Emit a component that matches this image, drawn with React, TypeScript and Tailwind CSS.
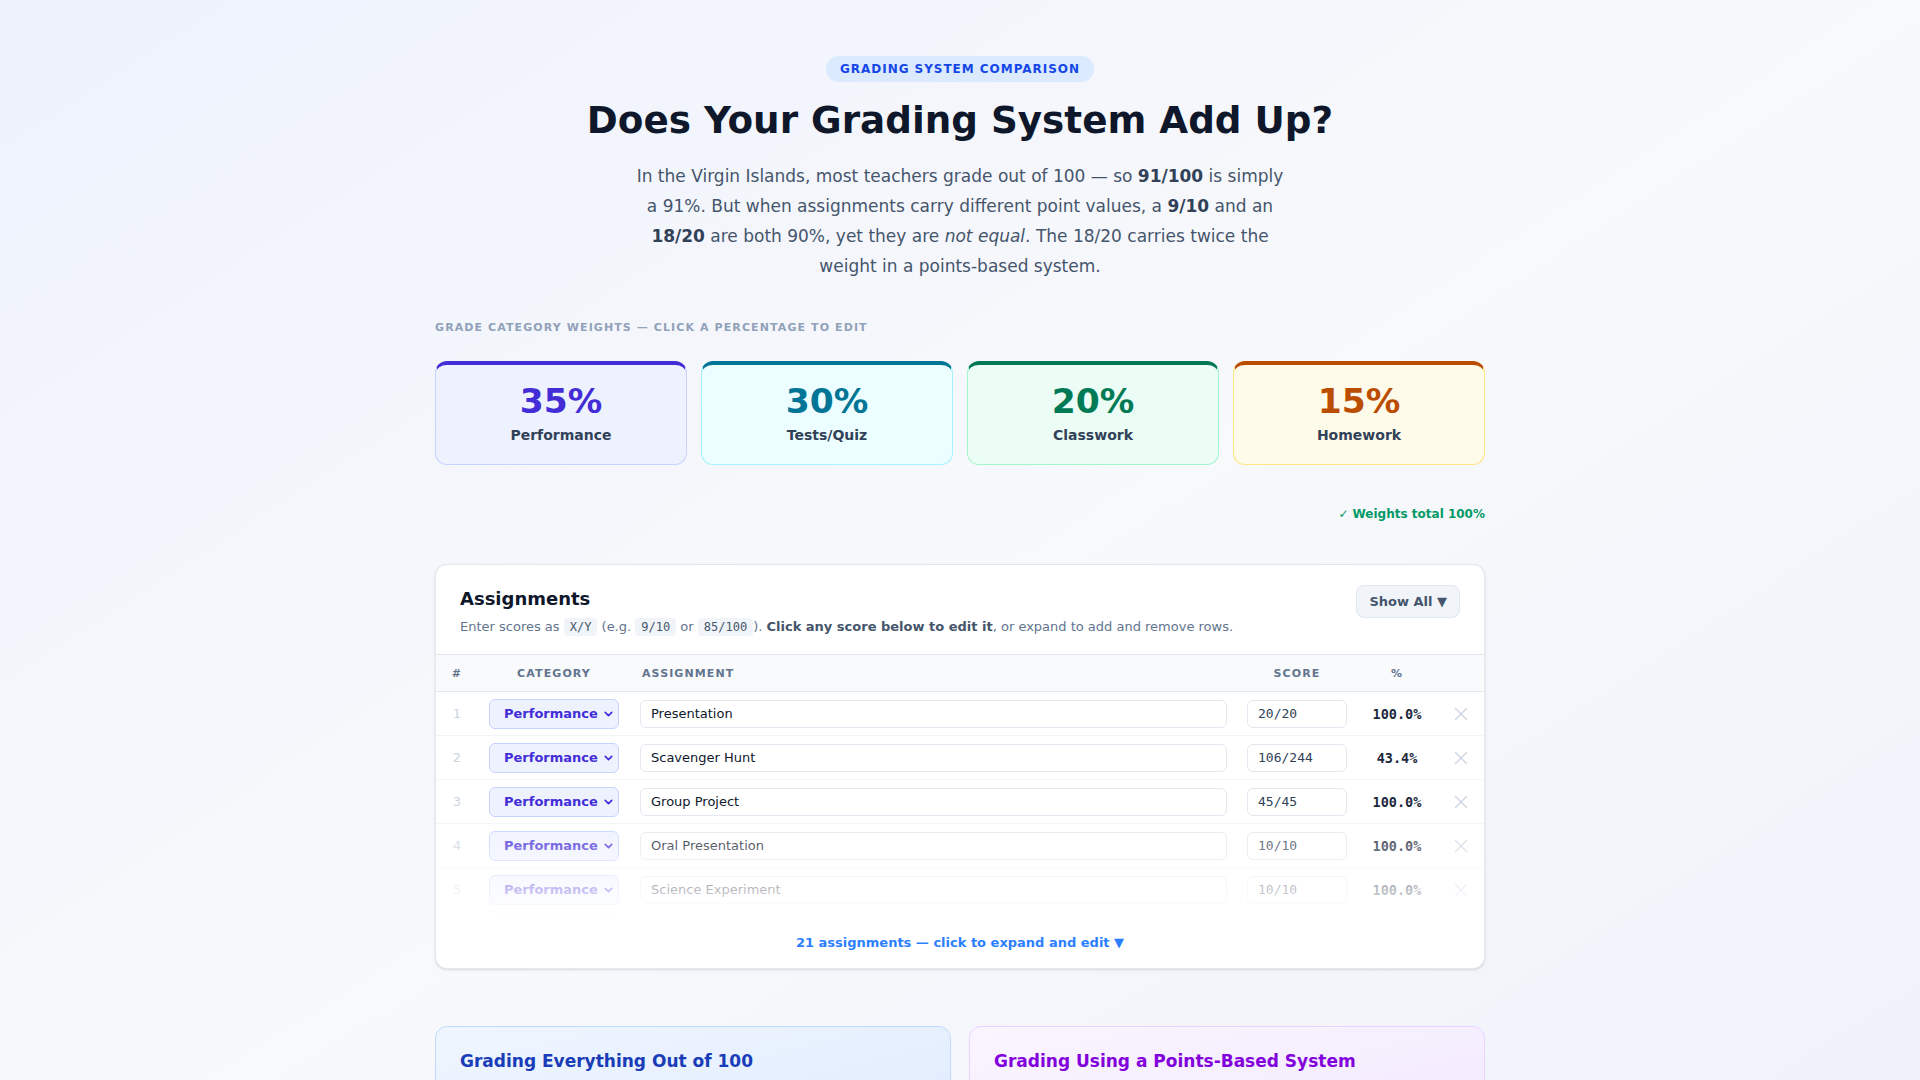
import { ChevronDown, X } from 'lucide-react';

interface Weight {
  pct: number;
  label: string;
  card: string;
  text: string;
}

interface Row {
  id: number;
  name: string;
  score: string;
  pct: string;
}

const weights: Weight[] = [
  { pct: 35, label: 'Performance', card: 'bg-indigo-50 border-indigo-200 border-t-indigo-700', text: 'text-indigo-700' },
  { pct: 30, label: 'Tests/Quiz', card: 'bg-cyan-50 border-cyan-200 border-t-cyan-700', text: 'text-cyan-700' },
  { pct: 20, label: 'Classwork', card: 'bg-emerald-50 border-emerald-200 border-t-emerald-700', text: 'text-emerald-700' },
  { pct: 15, label: 'Homework', card: 'bg-amber-50 border-amber-200 border-t-amber-700', text: 'text-amber-700' },
];

const rows: Row[] = [
  { id: 1, name: 'Presentation', score: '20/20', pct: '100.0%' },
  { id: 2, name: 'Scavenger Hunt', score: '106/244', pct: '43.4%' },
  { id: 3, name: 'Group Project', score: '45/45', pct: '100.0%' },
  { id: 4, name: 'Oral Presentation', score: '10/10', pct: '100.0%' },
  { id: 5, name: 'Science Experiment', score: '10/10', pct: '100.0%' },
  { id: 6, name: 'Poster Board', score: '18/20', pct: '90.0%' },
];

const gridCols = 'grid grid-cols-[42px_152px_1fr_120px_80px_47px] items-center';

function Code({ children }: { children: React.ReactNode }) {
  return (
    <code className="rounded bg-slate-100 px-1.5 py-0.5 font-['DejaVu_Sans_Mono',monospace] text-[12px] text-slate-600">
      {children}
    </code>
  );
}

export default function App() {
  return (
    <div className="min-h-screen bg-gradient-to-br from-[#eef2fd] via-[#f8f9fb] to-[#eff1fb] font-['DejaVu_Sans',sans-serif] text-slate-900">
      <div className="mx-auto max-w-[1050px] pt-14 pb-20">
        {/* ── Header ── */}
        <div className="flex flex-col items-center text-center">
          <span className="rounded-full bg-blue-100 px-3.5 py-[5px] text-[12px] leading-4 font-bold tracking-[0.08em] text-blue-700">
            GRADING SYSTEM COMPARISON
          </span>
          <h1 className="mt-[18px] text-[37.3px] leading-10 font-bold text-slate-900">Does Your Grading System Add Up?</h1>
          <p className="mt-[21px] max-w-[655px] text-[17px] leading-[1.77] text-slate-600">
            In the Virgin Islands, most teachers grade out of 100 — so <b className="text-slate-700">91/100</b> is simply
            a 91%. But when assignments carry different point values, a <b className="text-slate-700">9/10</b> and an{' '}
            <b className="text-slate-700">18/20</b> are both 90%, yet they are <i>not equal</i>. The 18/20 carries twice
            the weight in a points-based system.
          </p>
        </div>

        {/* ── Weights ── */}
        <div className="mt-[39px] text-[11px] leading-4 font-bold tracking-widest text-slate-400">
          GRADE CATEGORY WEIGHTS — CLICK A PERCENTAGE TO EDIT
        </div>
        <div className="mt-[25px] grid grid-cols-4 gap-3.5">
          {weights.map((w) => (
            <button
              key={w.label}
              type="button"
              className={`flex flex-col items-center rounded-xl border border-t-4 pt-4 pb-[19px] ${w.card}`}
            >
              <span className={`text-[34.5px] leading-10 font-bold ${w.text}`}>{w.pct}%</span>
              <span className="mt-1 text-sm font-bold text-slate-700">{w.label}</span>
            </button>
          ))}
        </div>
        <div className="mt-[39px] text-right text-[12px] leading-5 font-bold text-emerald-600">
          <span className="mr-1 font-normal">✓</span>Weights total 100%
        </div>

        {/* ── Assignments ── */}
        <div className="mt-[40px] overflow-hidden rounded-xl border border-slate-200 bg-white shadow-sm">
          <div className="flex items-start justify-between px-6 pt-5 pb-[15px]">
            <div>
              <h2 className="text-lg font-bold text-slate-900">Assignments</h2>
              <p className="mt-1 text-[13px] leading-5 text-slate-500">
                Enter scores as <Code>X/Y</Code> (e.g. <Code>9/10</Code> or <Code>85/100</Code>).{' '}
                <b className="text-slate-600">Click any score below to edit it</b>, or expand to add and remove rows.
              </p>
            </div>
            <button
              type="button"
              className="h-[33px] rounded-lg border border-slate-200 bg-slate-100 px-3 text-[13px] font-bold text-slate-600"
            >
              Show All ▼
            </button>
          </div>

          <div className={`${gridCols} mt-0.5 h-[38px] border-y border-slate-200 bg-slate-50 pt-px text-[11px] font-bold tracking-[0.1em] text-slate-500`}>
            <div className="text-center">#</div>
            <div className="text-center">CATEGORY</div>
            <div className="pl-3">ASSIGNMENT</div>
            <div className="text-center">SCORE</div>
            <div className="text-center">%</div>
            <div />
          </div>

          <div className="relative h-[231px] overflow-hidden">
            {rows.map((r) => (
              <div key={r.id} className={`${gridCols} h-11 border-b border-slate-100`}>
                <div className="text-center text-[13px] text-slate-300">{r.id}</div>
                <div className="relative px-[11px]">
                  <select className="h-[30px] w-full appearance-none rounded-md border border-indigo-200 bg-indigo-50 pl-3.5 text-[13px] font-bold text-indigo-700 outline-none">
                    <option>Performance</option>
                  </select>
                  <ChevronDown size={13} strokeWidth={3} className="pointer-events-none absolute top-1/2 right-[15px] -translate-y-1/2 text-indigo-700" />
                </div>
                <div className="px-2.5">
                  <input
                    readOnly
                    value={r.name}
                    className="h-7 w-full rounded-md border border-slate-200 bg-white px-2.5 text-[13px] text-slate-900 outline-none"
                  />
                </div>
                <div className="px-2.5">
                  <input
                    readOnly
                    value={r.score}
                    className="h-7 w-full rounded-md border border-slate-200 bg-white px-2.5 font-['DejaVu_Sans_Mono',monospace] text-[13px] text-slate-700 outline-none"
                  />
                </div>
                <div className="text-center font-['DejaVu_Sans_Mono',monospace] text-[13.5px] font-bold text-slate-800">{r.pct}</div>
                <div className="flex justify-center text-slate-300">
                  <X size={22} strokeWidth={1.4} />
                </div>
              </div>
            ))}
            <div className="pointer-events-none absolute inset-x-0 bottom-0 h-[110px] bg-gradient-to-b from-white/0 to-white" />
          </div>

          <button type="button" className="block w-full pt-[10px] pb-[15px] text-center text-[13px] leading-5 font-bold text-blue-500">
            21 assignments — click to expand and edit ▼
          </button>
        </div>

        {/* ── Comparison ── */}
        <div className="mt-[57px] grid grid-cols-2 gap-[18px]">
          <div className="rounded-xl border border-blue-200 bg-gradient-to-br from-blue-50 to-[#dfeafd] px-6 pt-5 pb-6">
            <h3 className="text-[17px] leading-7 font-bold text-blue-800">Grading Everything Out of 100</h3>
            <p className="mt-3 text-sm leading-relaxed text-slate-600">
              Every assignment is converted to a percentage first, so each one counts the same within its category.
            </p>
          </div>
          <div className="rounded-xl border border-purple-200 bg-gradient-to-br from-purple-50 to-[#f1e8fd] px-6 pt-5 pb-6">
            <h3 className="text-[17px] leading-7 font-bold text-purple-700">Grading Using a Points-Based System</h3>
            <p className="mt-3 text-sm leading-relaxed text-slate-600">
              Points earned are added up and divided by points possible, so larger assignments carry more weight.
            </p>
          </div>
        </div>
      </div>
    </div>
  );
}
